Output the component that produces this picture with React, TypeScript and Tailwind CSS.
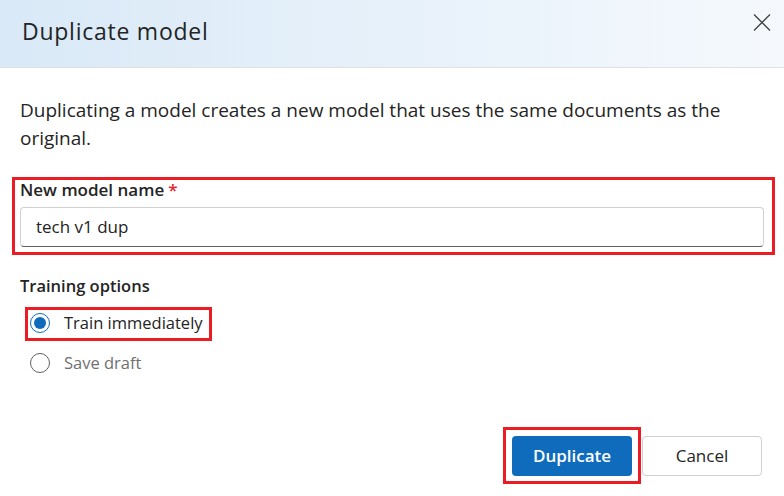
const font = { fontFamily: '"Open Sans", "Noto Sans", sans-serif' };

function RedBox({ className }: { className: string }) {
  return <span className={`pointer-events-none absolute border-[3px] border-[#ec1c24] ${className}`} />;
}

function Radio({ checked, label, muted }: { checked?: boolean; label: string; muted?: boolean }) {
  return (
    <label className="flex h-[40px] items-center gap-[14px] pl-[10px]">
      <span
        className={`flex h-[20px] w-[20px] items-center justify-center rounded-full border ${
          checked ? 'border-[#0f6cbd]' : 'border-[#616161]'
        }`}
      >
        {checked && <span className="h-[12px] w-[12px] rounded-full bg-[#0f6cbd]" />}
      </span>
      <span className={`text-[16.5px] ${muted ? 'text-[#707070]' : 'text-[#242424]'}`}>{label}</span>
    </label>
  );
}

export default function App() {
  return (
    <div className="relative h-[496px] w-[784px] overflow-hidden bg-white text-[#242424]" style={font}>
      {/* Header */}
      <header className="flex h-[68px] items-start justify-between border-b border-[#e1e1e1] bg-gradient-to-r from-[#d9e9f7] to-[#f5f9fd] pl-[22px] pr-[13px]">
        <h1 className="mt-[14px] text-[23px] font-medium tracking-[0.75px]">Duplicate model</h1>
        <svg className="mt-[14px]" width="18" height="17" viewBox="0 0 18 17" fill="none">
          <path d="M1 0.5L17 16.5M17 0.5L1 16.5" stroke="#424242" strokeWidth="1.3" />
        </svg>
      </header>

      <div className="px-[20px]">
        <p className="mt-[28px] text-[19px] leading-[28px]">
          Duplicating a model creates a new model that uses the same documents as the original.
        </p>

        {/* Model name */}
        <div className="relative mt-[27px]">
          <RedBox className="-left-[8px] -right-[11px] -top-[2px] -bottom-[8px]" />
          <div className="flex h-[22px] items-center text-[17px] font-semibold">
            New model name<span className="ml-[4px] text-[#e3262f]">*</span>
          </div>
          <div className="mt-[6px] flex h-[40px] items-center rounded-[4px] border border-[#d1d1d1] border-b-[#616161] px-[15px] text-[17px]">
            tech v1 dup
          </div>
        </div>

        {/* Training options */}
        <div className="mt-[28px] text-[16.5px] font-semibold leading-[22px]">Training options</div>
        <div className="relative mt-[6px]">
          <RedBox className="left-[5px] w-[187px] top-[4px] h-[34px]" />
          <Radio checked label="Train immediately" />
          <Radio label="Save draft" muted />
        </div>
      </div>

      {/* Footer */}
      <div className="absolute bottom-[20px] right-[22px] flex gap-[10px]">
        <div className="relative">
          <RedBox className="-left-[9px] -right-[9px] -top-[9px] -bottom-[8px]" />
          <button className="h-[40px] w-[120px] rounded-[4px] bg-[#0f6cbd] text-[17px] font-semibold text-white">
            Duplicate
          </button>
        </div>
        <button className="h-[40px] w-[120px] rounded-[4px] border border-[#d1d1d1] bg-white text-[17px] text-[#242424]">
          Cancel
        </button>
      </div>
    </div>
  );
}
